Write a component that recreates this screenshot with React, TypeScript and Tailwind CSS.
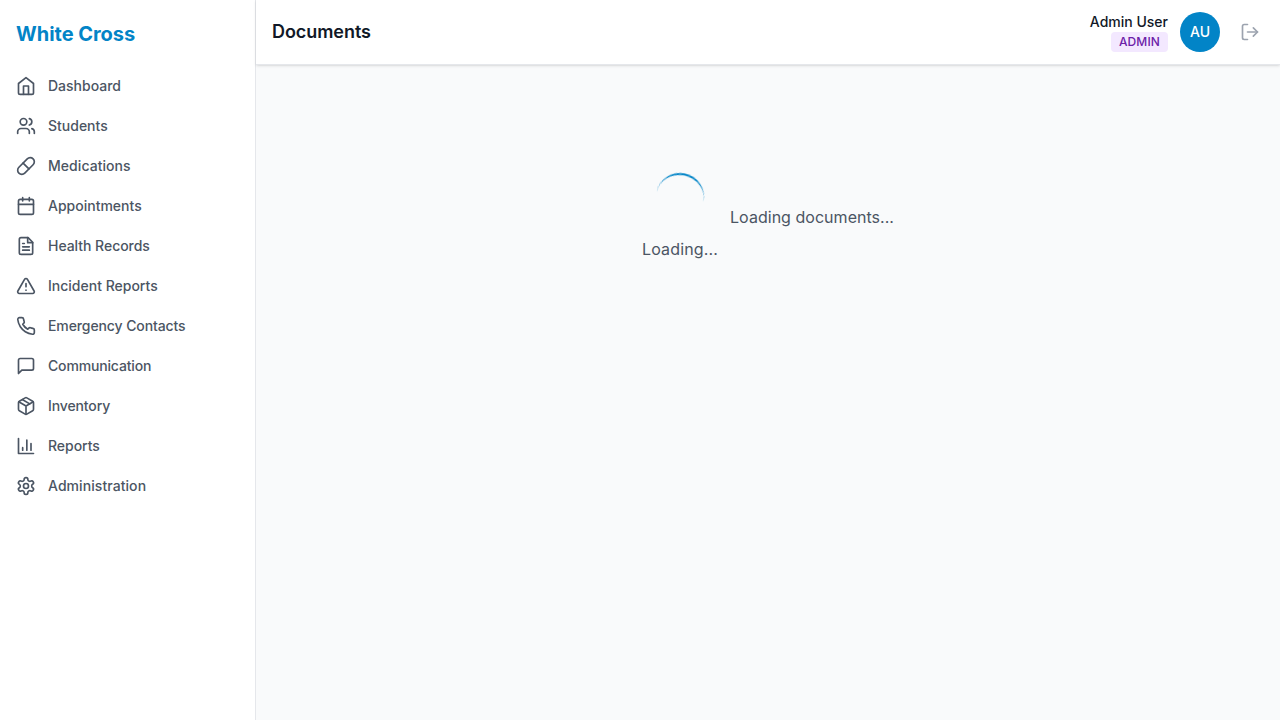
import type { ReactNode } from 'react';

function Icon({ children }: { children: ReactNode }) {
  return (
    <svg className="size-5 shrink-0" viewBox="0 0 24 24" fill="none" stroke="currentColor" strokeWidth="2" strokeLinecap="round" strokeLinejoin="round">
      {children}
    </svg>
  );
}

const items: { label: string; tracking: string; icon: ReactNode }[] = [
  { label: 'Dashboard', tracking: 'tracking-normal', icon: <><path d="m3 9 9-7 9 7v11a2 2 0 0 1-2 2H5a2 2 0 0 1-2-2z" /><polyline points="9 22 9 12 15 12 15 22" /></> },
  { label: 'Students', tracking: 'tracking-normal', icon: <><path d="M16 21v-2a4 4 0 0 0-4-4H6a4 4 0 0 0-4 4v2" /><circle cx="9" cy="7" r="4" /><path d="M22 21v-2a4 4 0 0 0-3-3.87" /><path d="M16 3.13a4 4 0 0 1 0 7.75" /></> },
  { label: 'Medications', tracking: 'tracking-[0.05px]', icon: <><path d="m10.5 20.5 10-10a4.95 4.95 0 1 0-7-7l-10 10a4.95 4.95 0 1 0 7 7Z" /><path d="m8.5 8.5 7 7" /></> },
  { label: 'Appointments', tracking: 'tracking-normal', icon: <><rect width="18" height="18" x="3" y="4" rx="2" /><path d="M16 2v4M8 2v4M3 10h18" /></> },
  { label: 'Health Records', tracking: 'tracking-[-0.04px]', icon: <><path d="M14.5 2H6a2 2 0 0 0-2 2v16a2 2 0 0 0 2 2h12a2 2 0 0 0 2-2V7.5L14.5 2z" /><polyline points="14 2 14 8 20 8" /><path d="M16 13H8M16 17H8M10 9H8" /></> },
  { label: 'Incident Reports', tracking: 'tracking-normal', icon: <><path d="m21.73 18-8-14a2 2 0 0 0-3.48 0l-8 14A2 2 0 0 0 4 21h16a2 2 0 0 0 1.73-3Z" /><path d="M12 9v4M12 17h.01" /></> },
  { label: 'Emergency Contacts', tracking: 'tracking-[-0.1px]', icon: <path d="M22 16.92v3a2 2 0 0 1-2.18 2 19.79 19.79 0 0 1-8.63-3.07 19.5 19.5 0 0 1-6-6 19.79 19.79 0 0 1-3.07-8.67A2 2 0 0 1 4.11 2h3a2 2 0 0 1 2 1.72 12.84 12.84 0 0 0 .7 2.81 2 2 0 0 1-.45 2.11L8.09 9.91a16 16 0 0 0 6 6l1.27-1.27a2 2 0 0 1 2.11-.45 12.84 12.84 0 0 0 2.81.7A2 2 0 0 1 22 16.92z" /> },
  { label: 'Communication', tracking: 'tracking-[-0.16px]', icon: <path d="M21 15a2 2 0 0 1-2 2H7l-4 4V5a2 2 0 0 1 2-2h14a2 2 0 0 1 2 2z" /> },
  { label: 'Inventory', tracking: 'tracking-[-0.12px]', icon: <><path d="m7.5 4.27 9 5.15" /><path d="M21 8a2 2 0 0 0-1-1.73l-7-4a2 2 0 0 0-2 0l-7 4A2 2 0 0 0 3 8v8a2 2 0 0 0 1 1.73l7 4a2 2 0 0 0 2 0l7-4A2 2 0 0 0 21 16Z" /><path d="m3.3 7 8.7 5 8.7-5M12 22V12" /></> },
  { label: 'Reports', tracking: 'tracking-[-0.03px]', icon: <path d="M3 3v18h18M18 17V9M13 17V5M8 17v-3" /> },
  { label: 'Administration', tracking: 'tracking-[0.07px]', icon: <><path d="M12.22 2h-.44a2 2 0 0 0-2 2v.18a2 2 0 0 1-1 1.73l-.43.25a2 2 0 0 1-2 0l-.15-.08a2 2 0 0 0-2.73.73l-.22.38a2 2 0 0 0 .73 2.73l.15.1a2 2 0 0 1 1 1.72v.51a2 2 0 0 1-1 1.74l-.15.09a2 2 0 0 0-.73 2.73l.22.38a2 2 0 0 0 2.73.73l.15-.08a2 2 0 0 1 2 0l.43.25a2 2 0 0 1 1 1.73V20a2 2 0 0 0 2 2h.44a2 2 0 0 0 2-2v-.18a2 2 0 0 1 1-1.73l.43-.25a2 2 0 0 1 2 0l.15.08a2 2 0 0 0 2.73-.73l.22-.39a2 2 0 0 0-.73-2.73l-.15-.08a2 2 0 0 1-1-1.74v-.5a2 2 0 0 1 1-1.74l.15-.09a2 2 0 0 0 .73-2.73l-.22-.38a2 2 0 0 0-2.73-.73l-.15.08a2 2 0 0 1-2 0l-.43-.25a2 2 0 0 1-1-1.73V4a2 2 0 0 0-2-2z" /><circle cx="12" cy="12" r="3" /></> },
];

export default function App() {
  return (
    <div className="flex h-screen bg-[#f9fafb] font-['Inter',sans-serif]">
      <aside className="w-64 shrink-0 border-r border-[#e5e7eb] bg-white pt-5">
        <h1 className="px-4 text-xl leading-7 font-bold tracking-[-0.03px] text-[#0284c7]">White Cross</h1>
        <nav className="mt-5 flex flex-col gap-1 px-2">
          {items.map(({ label, tracking, icon }) => (
            <a key={label} className="flex h-9 items-center gap-3 px-2 text-sm font-medium text-[#4b5563]">
              <Icon>{icon}</Icon>
              <span className={tracking}>{label}</span>
            </a>
          ))}
        </nav>
      </aside>
      <div className="flex flex-1 flex-col">
        <header className="flex h-[65px] items-center justify-between border-b border-[#e5e7eb] bg-white pr-3 pl-4 shadow-sm">
          <h2 className="text-lg font-semibold tracking-[-0.06px] text-[#111827]">Documents</h2>
          <div className="flex items-center gap-3">
            <div className="flex flex-col items-end">
              <p className="text-sm font-medium text-[#111827]">Admin User</p>
              <span className="rounded bg-[#f3e8ff] px-2 py-0.5 text-xs font-medium tracking-[0.12px] text-[#6b21a8]">ADMIN</span>
            </div>
            <div className="flex size-10 items-center justify-center rounded-full bg-[#0284c7] text-sm font-medium text-white">AU</div>
            <button className="p-2 text-[#9ca3af]">
              <Icon><path d="M9 21H5a2 2 0 0 1-2-2V5a2 2 0 0 1 2-2h4" /><polyline points="16 17 21 12 16 7" /><path d="M21 12H9" /></Icon>
            </button>
          </div>
        </header>
        <main className="flex justify-center pt-[108px]">
          <div className="flex items-center gap-3">
            <div className="flex flex-col items-center">
              <div className="size-12 rotate-[12deg] rounded-full border-t-2 border-[#0284c7] will-change-transform" />
              <p className="mt-4 tracking-[0.15px] text-[#4b5563]">Loading...</p>
            </div>
            <span className="tracking-[0.03px] text-[#4b5563]">Loading documents...</span>
          </div>
        </main>
      </div>
    </div>
  );
}
